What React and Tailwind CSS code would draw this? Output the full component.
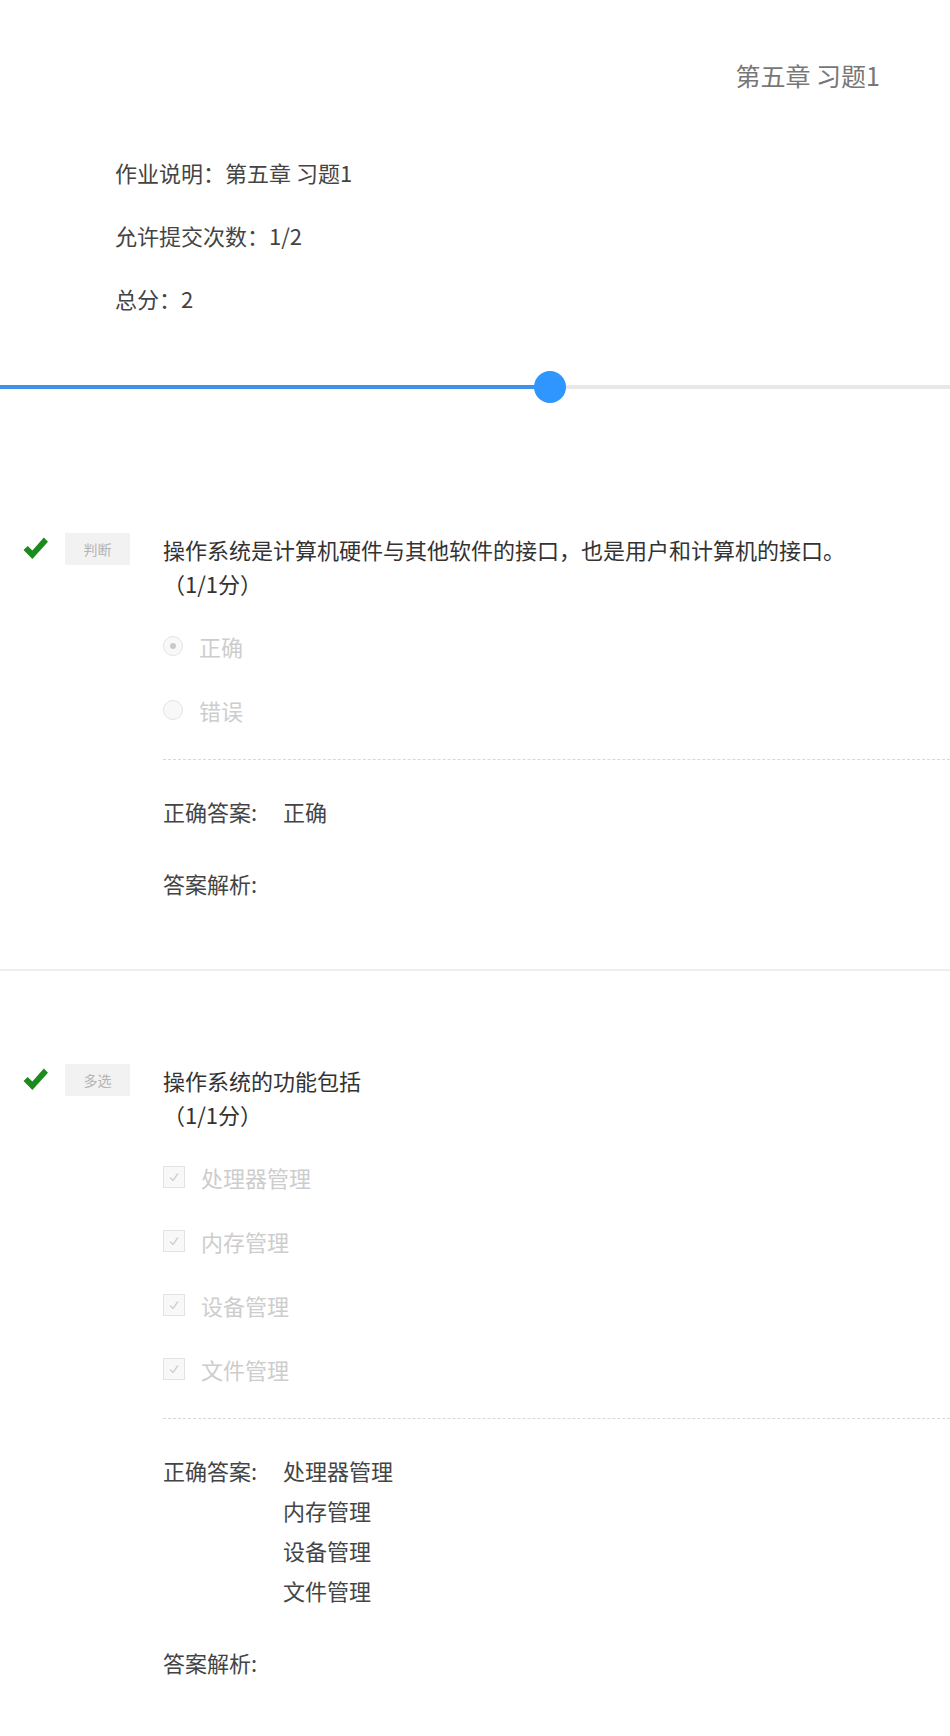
import React from "react";

const FONT = { fontFamily: '"Noto Sans CJK SC", "Noto Sans", sans-serif' };

function Check() {
  return (
    <svg width="25" height="25" viewBox="0 0 24 24" className="shrink-0">
      <path d="M0.5 13.5 L4.5 9.5 L9 14 L20 1.5 L24 5.5 L9 22 Z" fill="#1d8a1d" />
    </svg>
  );
}

function Radio({ checked }) {
  return (
    <span className="w-[20px] h-[20px] rounded-full border border-[#e3e3e3] bg-[#f8f8f8] flex items-center justify-center shrink-0">
      {checked && <span className="w-[6px] h-[6px] rounded-full bg-[#c9c9c9]" />}
    </span>
  );
}

function CheckBox() {
  return (
    <span className="w-[22px] h-[22px] border border-[#e3e3e3] bg-[#f8f8f8] flex items-center justify-center shrink-0">
      <svg width="14" height="14" viewBox="0 0 14 14">
        <path d="M3 7.5 L6 10.5 L11 3.5" fill="none" stroke="#cfcfcf" strokeWidth="1.4" />
      </svg>
    </span>
  );
}

function Question({ tag, text, options, type, answers }) {
  return (
    <div className="flex items-start">
      <div className="w-[163px] shrink-0 flex items-start pl-[23px]">
        <div className="mt-[4px]">
          <Check />
        </div>
        <div className="ml-[17px] w-[65px] h-[32px] bg-[#f2f2f2] text-[#b5b5b5] text-[14px] flex items-center justify-center mt-[1px]">
          {tag}
        </div>
      </div>
      <div className="flex-1">
        <div className="text-[22px] leading-[34px] text-[#333]">
          <div>{text}</div>
          <div>（1/1分）</div>
        </div>
        <div className="mt-[30px] flex flex-col gap-[32px]">
          {options.map((o, i) => (
            <div key={i} className="h-[32px] flex items-center text-[22px] text-[#cdcdcd]">
              {type === "radio" ? <Radio checked={i === 0} /> : <CheckBox />}
              <span className="ml-[16px]">{o}</span>
            </div>
          ))}
        </div>
        <div className="mt-[33px] border-t border-dashed border-[#d8d8d8]" />
        <div className="mt-[31px] flex text-[22px] leading-[40px] text-[#444]">
          <div className="w-[120px] shrink-0">正确答案:</div>
          <div className="flex flex-col">
            {answers.map((a, i) => (
              <div key={i}>{a}</div>
            ))}
          </div>
        </div>
        <div className="mt-[32px] text-[22px] leading-[40px] text-[#444]">答案解析:</div>
      </div>
    </div>
  );
}

export default function App() {
  return (
    <div className="w-[950px] min-h-[1736px] bg-white overflow-hidden" style={FONT}>
      <div className="flex justify-end pr-[70px] pt-[61px]">
        <div className="text-[25px] leading-[28px] text-[#777]">第五章 习题1</div>
      </div>
      <div className="pl-[115px] mt-[67px] flex flex-col gap-[31px] text-[22px] leading-[32px] text-[#444]">
        <div>作业说明：第五章 习题1</div>
        <div>允许提交次数：1/2</div>
        <div>总分：2</div>
      </div>
      <div className="relative mt-[57px] h-[32px]">
        <div className="absolute left-0 right-0 top-[14px] h-[4px] bg-[#e8e8e8]" />
        <div className="absolute left-0 w-[550px] top-[14px] h-[4px] bg-[#3d93e8]" />
        <div className="absolute left-[534px] top-0 w-[32px] h-[32px] rounded-full bg-[#2f95ff]" />
      </div>
      <div className="mt-[129px] pb-[66px]">
        <Question
          tag="判断"
          text="操作系统是计算机硬件与其他软件的接口，也是用户和计算机的接口。"
          options={["正确", "错误"]}
          type="radio"
          answers={["正确"]}
        />
      </div>
      <div className="h-[2px] bg-[#eeeeee]" />
      <div className="mt-[92px] pb-[60px]">
        <Question
          tag="多选"
          text="操作系统的功能包括"
          options={["处理器管理", "内存管理", "设备管理", "文件管理"]}
          type="checkbox"
          answers={["处理器管理", "内存管理", "设备管理", "文件管理"]}
        />
      </div>
    </div>
  );
}
